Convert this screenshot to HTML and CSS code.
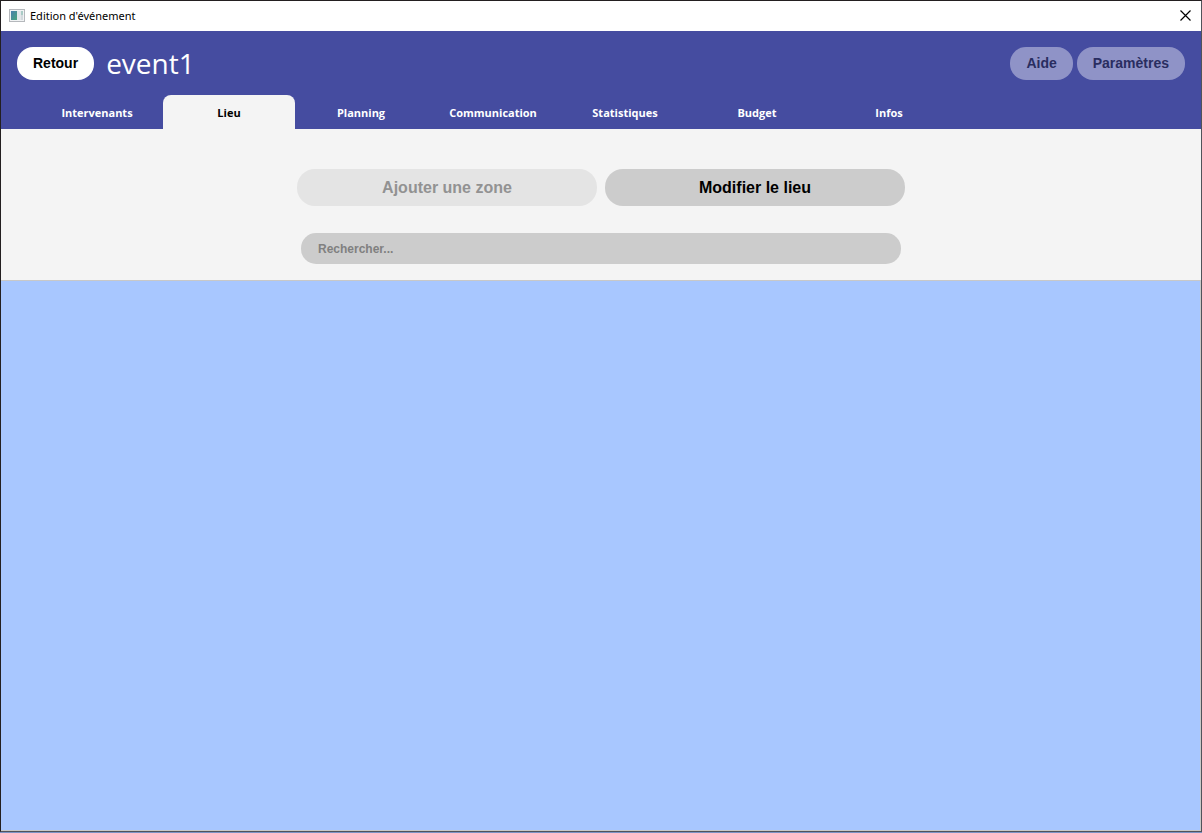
FILE: index.html
```html
<!DOCTYPE html>
<html lang="fr">
<head>
    <meta charset="UTF-8">
    <meta name="viewport" content="width=device-width, initial-scale=1.0">
    <title>Edition d'événement</title>
    <link rel="stylesheet" href="styles.css">
</head>
<body>
    <div class="window">
        <div class="titlebar">
            <svg class="app-icon" width="16" height="13" viewBox="0 0 16 13" aria-hidden="true">
                <defs>
                    <linearGradient id="ecran" x1="0" y1="0" x2="1" y2="1">
                        <stop offset="0" stop-color="#4a7fae"/>
                        <stop offset="1" stop-color="#4aa57c"/>
                    </linearGradient>
                </defs>
                <rect x="0.5" y="0.5" width="15" height="12" fill="#f1f3f4" stroke="#b5b8bc"/>
                <rect x="2" y="2" width="6" height="9" fill="url(#ecran)"/>
                <rect x="8" y="2" width="4" height="9" fill="#e3e7ea"/>
                <rect x="12" y="2" width="2" height="4" fill="#a9cbc6"/>
                <rect x="12" y="6" width="2" height="5" fill="#d3d9dd"/>
            </svg>
            <span class="window-title">Edition d'événement</span>
            <button class="close" type="button" aria-label="Fermer">
                <svg width="11" height="11" viewBox="0 0 11 11">
                    <path d="M0.5 0.5L10.5 10.5M10.5 0.5L0.5 10.5" stroke="#000" stroke-width="1.2" fill="none"/>
                </svg>
            </button>
        </div>

        <header class="header">
            <div class="toolbar">
                <button class="btn btn-back" type="button">Retour</button>
                <h1>event1</h1>
                <button class="btn btn-soft" type="button">Aide</button>
                <button class="btn btn-soft" type="button">Paramètres</button>
            </div>
            <nav class="tabs">
                <a class="tab" href="#intervenants">Intervenants</a>
                <a class="tab active" href="#lieu">Lieu</a>
                <a class="tab" href="#planning">Planning</a>
                <a class="tab" href="#communication">Communication</a>
                <a class="tab" href="#statistiques">Statistiques</a>
                <a class="tab" href="#budget">Budget</a>
                <a class="tab" href="#infos">Infos</a>
            </nav>
        </header>

        <section class="actions">
            <div class="action-row">
                <button class="action" type="button" disabled>Ajouter une zone</button>
                <button class="action" type="button">Modifier le lieu</button>
            </div>
            <input class="search" type="text" placeholder="Rechercher..." aria-label="Rechercher">
        </section>

        <main class="plan"></main>
    </div>
</body>
</html>
```
FILE: styles.css
```css
* {
    box-sizing: border-box;
}

body {
    margin: 0;
    padding-bottom: 1px;
    background-color: #7d93c4;
    font-family: "Open Sans", "Noto Sans", sans-serif;
}

button, input {
    font-family: "Liberation Sans", Arial, sans-serif;
    font-weight: bold;
    border: none;
}

.window {
    display: flex;
    flex-direction: column;
    min-height: calc(100vh - 1px);
    border: 1px solid #231f20;
    border-right-color: #50535a;
    border-bottom-color: #50535a;
    background-color: #f4f4f4;
}

/* barre de titre */
.titlebar {
    display: flex;
    align-items: center;
    height: 30px;
    padding: 0 0 2px 8px;
    background-color: #fff;
}

.window-title {
    flex: 1;
    margin-left: 5px;
    font-family: "Noto Sans", sans-serif;
    font-size: 11px;
    color: #000;
}

.close {
    display: flex;
    padding: 10px;
    background: none;
}

/* en-tête */
.header {
    background-color: #454ca0;
}

.toolbar {
    display: flex;
    align-items: center;
    gap: 4px;
    height: 64px;
    padding: 0 16px;
}

h1 {
    flex: 1;
    margin: 0 8px;
    font-size: 28px;
    font-weight: 400;
    line-height: 32px;
    color: #fff;
}

.btn {
    height: 33px;
    padding: 0 16px;
    border-radius: 16px;
    font-size: 14px;
}

.btn-back {
    background-color: #fff;
    color: #000;
}

.btn-soft {
    background-color: #8f93c7;
    color: #292d60;
}

.tabs {
    display: flex;
    padding-left: 30px;
}

.tab {
    width: 132px;
    padding-top: 2px;
    border-radius: 8px 8px 0 0;
    font-size: 11px;
    font-weight: bold;
    line-height: 32px;
    text-align: center;
    text-decoration: none;
    color: #fff;
}

.tab.active {
    background-color: #f4f4f4;
    color: #000;
}

/* actions du lieu */
.actions {
    display: flex;
    flex-direction: column;
    align-items: center;
    gap: 27px;
    padding: 40px 16px 16px;
}

.action-row {
    display: flex;
    gap: 8px;
}

.action {
    width: 300px;
    height: 37px;
    border-radius: 18px;
    background-color: #ccc;
    font-size: 16px;
    color: #000;
}

.action:disabled {
    background-color: #e4e4e4;
    color: #929292;
}

.search {
    width: 100%;
    max-width: 600px;
    height: 31px;
    padding: 0 17px;
    border-radius: 15px;
    background-color: #ccc;
    font-size: 12px;
    color: #000;
}

.search::placeholder {
    color: #808080;
}

.plan {
    flex: 1;
    border: 1px solid #c8c8c8;
    border-left: none;
    background-color: #a8c7ff;
}
```
